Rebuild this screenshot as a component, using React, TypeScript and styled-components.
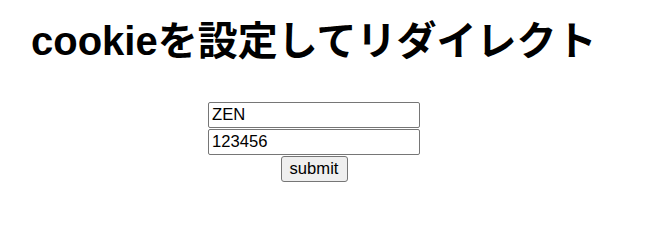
import {type FC, useState} from 'react';
import styled, {createGlobalStyle} from 'styled-components';

const GlobalStyle = createGlobalStyle`
    body {
        margin: 0;
        background: #ffffff;
        color: #000000;
        font-family: "Liberation Sans", "Noto Sans CJK JP", sans-serif;
    }
`;
const Page = styled.main`
    padding-top: 18px;
`;
const Title = styled.h1`
    margin: 0 0 0 31px;
    font-size: 40px;
    line-height: 46px;
    font-weight: bold;
    font-family: "Liberation Sans", "Noto Sans CJK JP", sans-serif;
`;
const Form = styled.form`
    width: 628px;
    margin-top: 38px;
    display: flex;
    flex-direction: column;
    align-items: center;
`;
const TextInput = styled.input`
    box-sizing: border-box;
    width: 212px;
    height: 26px;
    margin: 0 0 1px;
    padding: 1px 3px;
    border: 1px solid #767676;
    border-radius: 2px;
    font-family: "Liberation Sans", sans-serif;
    font-size: 16.6px;
    color: #000000;
    background: #ffffff;
`;
const SubmitButton = styled.button`
    box-sizing: border-box;
    width: 67px;
    height: 26px;
    padding: 0 8px;
    border: 1px solid #767676;
    border-radius: 3px;
    background: #efefef;
    color: #000000;
    font-family: "Liberation Sans", sans-serif;
    font-size: 16.6px;
`;

const App: FC = () => {
    const [name, setName] = useState('ZEN');
    const [pass, setPass] = useState('123456');
    return (
        <>
            <GlobalStyle/>
            <Page>
                <Title>cookieを設定してリダイレクト</Title>
                <Form onSubmit={(e) => e.preventDefault()}>
                    <TextInput value={name} onChange={(e) => setName(e.target.value)}/>
                    <TextInput value={pass} onChange={(e) => setPass(e.target.value)}/>
                    <SubmitButton type="submit">submit</SubmitButton>
                </Form>
            </Page>
        </>
    )
}

export default App;
